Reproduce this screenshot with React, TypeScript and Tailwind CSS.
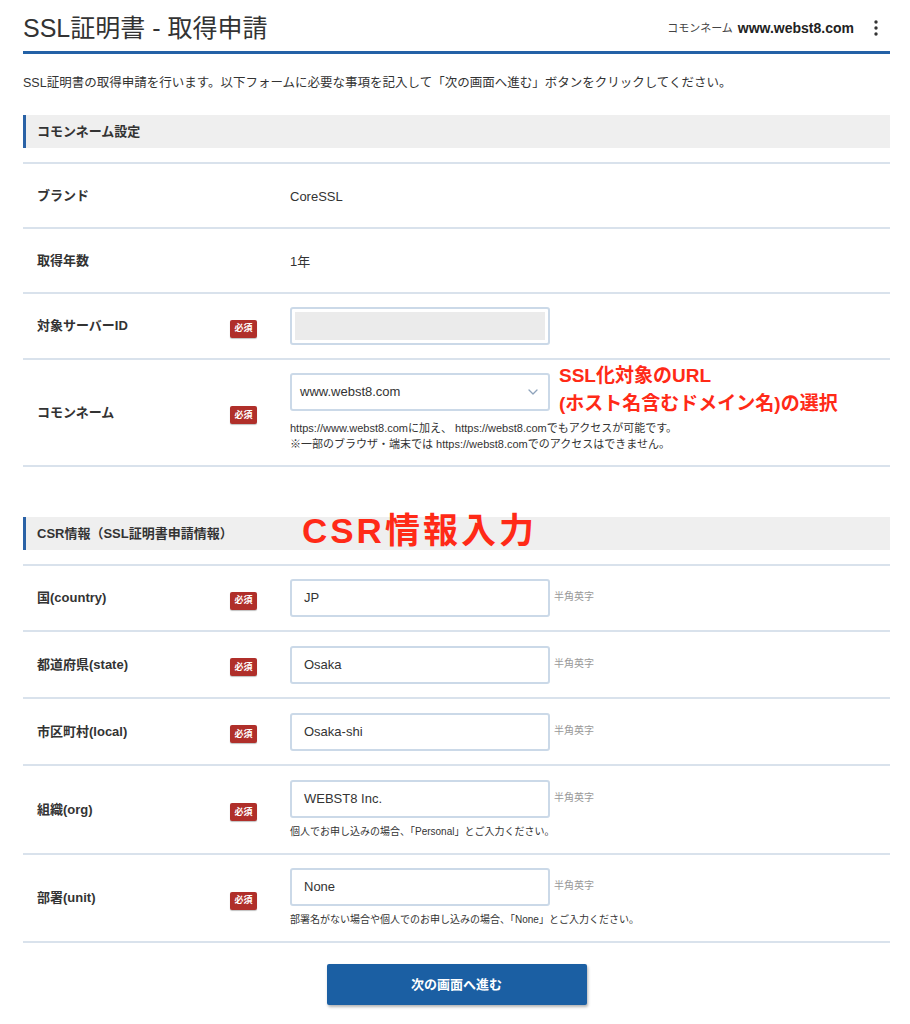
import type { ReactNode } from 'react';

const font = "font-['Liberation_Sans','Noto_Sans_CJK_JP',sans-serif]";

function Badge() {
  return (
    <span className="inline-flex h-[18px] w-[27px] items-center justify-center rounded-[2px] bg-[#b02f2a] text-[9px] font-bold text-white shadow-[0_1px_1px_rgba(0,0,0,0.25)]">
      必須
    </span>
  );
}

function SectionHeader({ title, children }: { title: string; children?: ReactNode }) {
  return (
    <div className="relative flex h-[33px] items-center border-l-[3px] border-[#2a62a6] bg-[#efefef] pl-[11px]">
      <span className="text-[13px] font-bold text-[#333]">{title}</span>
      {children}
    </div>
  );
}

function Row({
  label,
  required,
  children,
  className = '',
}: {
  label: string;
  required?: boolean;
  children: ReactNode;
  className?: string;
}) {
  return (
    <div className={`grid grid-cols-[193px_60px_1fr] items-center border-b-2 border-[#d9e2ec] pl-[14px] ${className}`}>
      <div className="text-[13px] font-bold text-[#333]">{label}</div>
      <div>{required && <Badge />}</div>
      <div>{children}</div>
    </div>
  );
}

function TextInput({ value, note = '半角英字' }: { value: string; note?: string }) {
  return (
    <div className="flex items-start">
      <div className="flex h-[38px] w-[260px] items-center rounded-[3px] border-2 border-[#cbd9e8] bg-white pl-[12px] text-[13px] text-[#333]">
        {value}
      </div>
      <span className="ml-[4px] mt-[10px] text-[10px] text-[#999]">{note}</span>
    </div>
  );
}

function Help({ children, className = 'text-[10px]' }: { children: ReactNode; className?: string }) {
  return <p className={`${className} leading-[16px] text-[#333]`}>{children}</p>;
}

export default function App() {
  return (
    <div className={`${font} w-[910px] bg-white pb-[20px] pl-[23px] pr-[20px] text-[#333]`}>
      {/* header */}
      <div className="flex items-center justify-between border-b-[3px] border-[#2361a6] pb-[7px] pt-[12px]">
        <h1 className="text-[25px] leading-[32px] text-[#333]">SSL証明書 - 取得申請</h1>
        <div className="flex items-center">
          <span className="text-[11px] text-[#444]">コモンネーム</span>
          <span className="ml-[5px] text-[14px] font-bold text-[#222]">www.webst8.com</span>
          <svg className="ml-[20px] mr-[12px]" width="4" height="16" viewBox="0 0 4 16">
            <circle cx="2" cy="2" r="1.7" fill="#333" />
            <circle cx="2" cy="8" r="1.7" fill="#333" />
            <circle cx="2" cy="14" r="1.7" fill="#333" />
          </svg>
        </div>
      </div>

      <p className="mt-[20px] text-[12.5px] leading-[18px] text-[#333]">
        SSL証明書の取得申請を行います。以下フォームに必要な事項を記入して「次の画面へ進む」ボタンをクリックしてください。
      </p>

      {/* section 1 */}
      <div className="mt-[23px]">
        <SectionHeader title="コモンネーム設定" />
        <div className="mt-[14px] border-t-2 border-[#d9e2ec]">
          <Row label="ブランド" className="h-[65px]">
            <span className="text-[13px] text-[#333]">CoreSSL</span>
          </Row>
          <Row label="取得年数" className="h-[65px]">
            <span className="text-[13px] text-[#333]">1年</span>
          </Row>
          <Row label="対象サーバーID" required className="h-[66px]">
            <div className="h-[38px] w-[260px] rounded-[3px] border-2 border-[#cbd9e8] bg-white p-[3px]">
              <div className="h-full w-full bg-[#ebebeb]" />
            </div>
          </Row>
          <Row label="コモンネーム" required className="h-[107px]">
            <div className="relative">
              <div className="flex h-[38px] w-[260px] items-center justify-between rounded-[3px] border-2 border-[#cbd9e8] bg-white pl-[8px] pr-[10px] text-[13px] text-[#333]">
                <span>www.webst8.com</span>
                <svg width="10" height="6" viewBox="0 0 10 6" fill="none">
                  <path d="M1 1l4 4 4-4" stroke="#8ea3bb" strokeWidth="1.3" strokeLinecap="round" strokeLinejoin="round" />
                </svg>
              </div>
              <div className="absolute left-[269px] top-[-11px] text-[19px] font-bold leading-[28px] text-[#ff2a17]">
                <div>SSL化対象のURL</div>
                <div>(ホスト名含むドメイン名)の選択</div>
              </div>
              <div className="mt-[9px]">
                <Help className="text-[11px]">https://www.webst8.comに加え、 https://webst8.comでもアクセスが可能です。</Help>
                <Help className="text-[11px]">※一部のブラウザ・端末では https://webst8.comでのアクセスはできません。</Help>
              </div>
            </div>
          </Row>
        </div>
      </div>

      {/* section 2 */}
      <div className="mt-[50px]">
        <SectionHeader title="CSR情報（SSL証明書申請情報）">
          <span className="absolute left-[276px] top-[-6px] text-[35px] font-bold leading-[40px] tracking-[3px] text-[#ff2a17]">
            CSR情報入力
          </span>
        </SectionHeader>
        <div className="mt-[14px] border-t-2 border-[#d9e2ec]">
          <Row label="国(country)" required className="h-[66px]">
            <TextInput value="JP" />
          </Row>
          <Row label="都道府県(state)" required className="h-[67px]">
            <TextInput value="Osaka" />
          </Row>
          <Row label="市区町村(local)" required className="h-[67px]">
            <TextInput value="Osaka-shi" />
          </Row>
          <Row label="組織(org)" required className="h-[89px]">
            <TextInput value="WEBST8 Inc." />
            <div className="mt-[6px]">
              <Help>個人でお申し込みの場合、「Personal」とご入力ください。</Help>
            </div>
          </Row>
          <Row label="部署(unit)" required className="h-[88px]">
            <TextInput value="None" />
            <div className="mt-[6px]">
              <Help>部署名がない場合や個人でのお申し込みの場合、「None」とご入力ください。</Help>
            </div>
          </Row>
        </div>
      </div>

      <div className="mt-[21px] flex justify-center">
        <button className="h-[41px] w-[260px] rounded-[2px] bg-[#1b5fa3] text-[13px] font-bold text-white shadow-[1px_2px_3px_rgba(0,0,0,0.3)]">
          次の画面へ進む
        </button>
      </div>
    </div>
  );
}
